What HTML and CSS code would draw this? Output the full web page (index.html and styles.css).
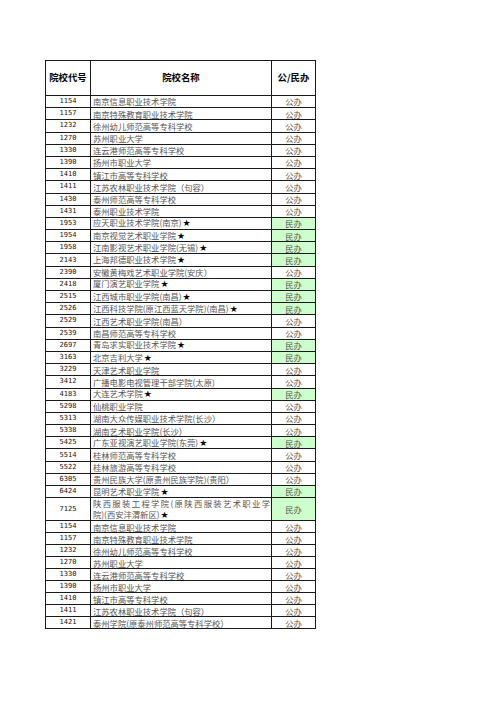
FILE: index.html
```html
<!DOCTYPE html>
<html lang="zh-CN">
<head>
<meta charset="utf-8">
<title>院校名单</title>
<link rel="stylesheet" href="styles.css">
</head>
<body>
<table class="sheet">
<colgroup><col class="c-code"><col class="c-name"><col class="c-type"></colgroup>
<thead>
<tr class="head"><th>院校代号</th><th>院校名称</th><th>公/民办</th></tr>
</thead>
<tbody>
<tr class="r"><td class="code">1154</td><td class="name">南京信息职业技术学院</td><td class="type">公办</td></tr>
<tr class="r"><td class="code">1157</td><td class="name">南京特殊教育职业技术学院</td><td class="type">公办</td></tr>
<tr class="r"><td class="code">1232</td><td class="name">徐州幼儿师范高等专科学校</td><td class="type">公办</td></tr>
<tr class="r"><td class="code">1270</td><td class="name">苏州职业大学</td><td class="type">公办</td></tr>
<tr class="r"><td class="code">1330</td><td class="name">连云港师范高等专科学校</td><td class="type">公办</td></tr>
<tr class="r"><td class="code">1390</td><td class="name">扬州市职业大学</td><td class="type">公办</td></tr>
<tr class="r"><td class="code">1410</td><td class="name">镇江市高等专科学校</td><td class="type">公办</td></tr>
<tr class="r"><td class="code">1411</td><td class="name">江苏农林职业技术学院（句容）</td><td class="type">公办</td></tr>
<tr class="r"><td class="code">1430</td><td class="name">泰州师范高等专科学校</td><td class="type">公办</td></tr>
<tr class="r"><td class="code">1431</td><td class="name">泰州职业技术学院</td><td class="type">公办</td></tr>
<tr class="r"><td class="code">1953</td><td class="name">应天职业技术学院(南京)<span class="star">★</span></td><td class="type priv">民办</td></tr>
<tr class="r"><td class="code">1954</td><td class="name">南京视觉艺术职业学院<span class="star">★</span></td><td class="type priv">民办</td></tr>
<tr class="r"><td class="code">1958</td><td class="name">江南影视艺术职业学院(无锡)<span class="star">★</span></td><td class="type priv">民办</td></tr>
<tr class="r"><td class="code">2143</td><td class="name">上海邦德职业技术学院<span class="star">★</span></td><td class="type priv">民办</td></tr>
<tr class="r"><td class="code">2390</td><td class="name">安徽黄梅戏艺术职业学院(安庆）</td><td class="type">公办</td></tr>
<tr class="r"><td class="code">2418</td><td class="name">厦门演艺职业学院<span class="star">★</span></td><td class="type priv">民办</td></tr>
<tr class="r"><td class="code">2515</td><td class="name">江西城市职业学院(南昌)<span class="star">★</span></td><td class="type priv">民办</td></tr>
<tr class="r"><td class="code">2526</td><td class="name">江西科技学院(原江西蓝天学院)(南昌)<span class="star">★</span></td><td class="type priv">民办</td></tr>
<tr class="r"><td class="code">2529</td><td class="name">江西艺术职业学院(南昌）</td><td class="type">公办</td></tr>
<tr class="r"><td class="code">2539</td><td class="name">南昌师范高等专科学校</td><td class="type">公办</td></tr>
<tr class="r"><td class="code">2697</td><td class="name">青岛求实职业技术学院<span class="star">★</span></td><td class="type priv">民办</td></tr>
<tr class="r"><td class="code">3163</td><td class="name">北京吉利大学<span class="star">★</span></td><td class="type priv">民办</td></tr>
<tr class="r"><td class="code">3229</td><td class="name">天津艺术职业学院</td><td class="type">公办</td></tr>
<tr class="r"><td class="code">3412</td><td class="name">广播电影电视管理干部学院(太原)</td><td class="type">公办</td></tr>
<tr class="r"><td class="code">4183</td><td class="name">大连艺术学院<span class="star">★</span></td><td class="type priv">民办</td></tr>
<tr class="r"><td class="code">5298</td><td class="name">仙桃职业学院</td><td class="type">公办</td></tr>
<tr class="r"><td class="code">5313</td><td class="name">湖南大众传媒职业技术学院(长沙）</td><td class="type">公办</td></tr>
<tr class="r"><td class="code">5338</td><td class="name">湖南艺术职业学院(长沙）</td><td class="type">公办</td></tr>
<tr class="r"><td class="code">5425</td><td class="name">广东亚视演艺职业学院(东莞)<span class="star">★</span></td><td class="type priv">民办</td></tr>
<tr class="r"><td class="code">5514</td><td class="name">桂林师范高等专科学校</td><td class="type">公办</td></tr>
<tr class="r"><td class="code">5522</td><td class="name">桂林旅游高等专科学校</td><td class="type">公办</td></tr>
<tr class="r"><td class="code">6305</td><td class="name">贵州民族大学(原贵州民族学院)(贵阳）</td><td class="type">公办</td></tr>
<tr class="r"><td class="code">6424</td><td class="name">昆明艺术职业学院<span class="star">★</span></td><td class="type priv">民办</td></tr>
<tr class="r2"><td class="code">7125</td><td class="name"><span class="line-just">陕西服装工程学院(原陕西服装艺术职业学</span><span class="line">院)(西安沣渭新区)<span class="star">★</span></span></td><td class="type priv">民办</td></tr>
<tr class="r3"><td class="code">1154</td><td class="name">南京信息职业技术学院</td><td class="type">公办</td></tr>
<tr class="r3"><td class="code">1157</td><td class="name">南京特殊教育职业技术学院</td><td class="type">公办</td></tr>
<tr class="r3"><td class="code">1232</td><td class="name">徐州幼儿师范高等专科学校</td><td class="type">公办</td></tr>
<tr class="r3"><td class="code">1270</td><td class="name">苏州职业大学</td><td class="type">公办</td></tr>
<tr class="r3"><td class="code">1330</td><td class="name">连云港师范高等专科学校</td><td class="type">公办</td></tr>
<tr class="r3"><td class="code">1390</td><td class="name">扬州市职业大学</td><td class="type">公办</td></tr>
<tr class="r3"><td class="code">1410</td><td class="name">镇江市高等专科学校</td><td class="type">公办</td></tr>
<tr class="r3"><td class="code">1411</td><td class="name">江苏农林职业技术学院（句容）</td><td class="type">公办</td></tr>
<tr class="r3"><td class="code">1421</td><td class="name">泰州学院(原泰州师范高等专科学校）</td><td class="type">公办</td></tr>
</tbody>
</table>
</body>
</html>
```
FILE: styles.css
```css
html, body {
  margin: 0;
  padding: 0;
  background: #ffffff;
}
body {
  padding: 60px 0 0 45px;
  font-family: "Noto Sans CJK SC", "Noto Sans", sans-serif;
}
.sheet {
  border-collapse: collapse;
  table-layout: fixed;
  width: 271px;
}
.c-code { width: 45px; }
.c-name { width: 181px; }
.c-type { width: 44px; }
.sheet th,
.sheet td {
  border: 1px solid #1a1a1a;
  padding: 0;
  vertical-align: middle;
  overflow: hidden;
  white-space: nowrap;
}
.head {
  height: 35px;
}
.head th {
  font-family: "Noto Sans CJK SC", sans-serif;
  font-weight: 700;
  font-size: 9.4px;
  line-height: 1;
  color: #000;
  text-align: center;
}
.r { height: 12.2px; }
.r2 { height: 23px; }
.r3 { height: 12px; }
.code {
  font-family: "DejaVu Sans Mono", "Liberation Mono", monospace;
  font-size: 7px;
  line-height: 1;
  color: #111;
  text-align: center;
}
.name {
  font-size: 8.3px;
  line-height: 1;
  color: #555;
  text-align: left;
  padding: 0 1px 0 2px !important;
}
.type {
  font-size: 8.3px;
  line-height: 1;
  color: #555;
  text-align: center;
}
.priv {
  background: #ccffcc;
}
.star {
  color: #000;
  font-family: "DejaVu Sans", sans-serif;
  font-size: 9px;
  line-height: 1;
  margin-left: 1px;
}
.r2 .name {
  white-space: normal;
  line-height: 11px;
}
.line-just {
  display: block;
  text-align: justify;
  text-align-last: justify;
}
.line {
  display: block;
}
```
